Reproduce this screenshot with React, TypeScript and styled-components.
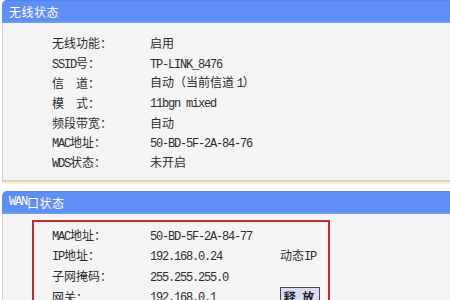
import styled, { createGlobalStyle } from "styled-components";

const GlobalStyle = createGlobalStyle`
  html, body {
    margin: 0;
    padding: 0;
    background: #ffffff;
    overflow: hidden;
  }
  body {
    font-family: "Noto Sans CJK SC", "Liberation Sans", sans-serif;
    font-size: 12px;
    color: #2b2b2b;
  }
`;

type Row = { label: React.ReactNode; value: React.ReactNode; extra?: React.ReactNode };

function App() {
  const wirelessRows: Row[] = [
    { label: "无线功能：", value: "启用" },
    { label: <><L>SSID</L>号：</>, value: <L>TP-LINK_8476</L> },
    { label: "信　道：", value: <>自动（当前信道 <L>1</L>）</> },
    { label: "模　式：", value: <L>11bgn mixed</L> },
    { label: "频段带宽：", value: "自动" },
    { label: <><L>MAC</L>地址：</>, value: <L>50-BD-5F-2A-84-76</L> },
    { label: <><L>WDS</L>状态：</>, value: "未开启" },
  ];

  const wanRows: Row[] = [
    { label: <><L>MAC</L>地址：</>, value: <L>50-BD-5F-2A-84-77</L> },
    { label: <><L>IP</L>地址：</>, value: <L>192.168.0.24</L>, extra: <span>动态<L>IP</L></span> },
    { label: "子网掩码：", value: <L>255.255.255.0</L> },
    { label: "网关：", value: <L>192.168.0.1</L>, extra: <ReleaseBtn>释 放</ReleaseBtn> },
  ];

  return (
    <Page>
      <GlobalStyle />
      <Panel>
        <Header>无线状态</Header>
        <Body>
          <Table>
            {wirelessRows.map((r, i) => (
              <Line key={i}>
                <Label>{r.label}</Label>
                <Value>{r.value}</Value>
                <Extra />
              </Line>
            ))}
          </Table>
        </Body>
      </Panel>
      <Panel $gap>
        <Header>
          <L>WAN</L>口状态
        </Header>
        <Body $wan>
          <Highlight>
            {wanRows.map((r, i) => (
              <Line key={i} $tall>
                <Label>{r.label}</Label>
                <Value>{r.value}</Value>
                <Extra>{r.extra}</Extra>
              </Line>
            ))}
          </Highlight>
        </Body>
      </Panel>
    </Page>
  );
}

export default App;

const Page = styled.div`
  width: 450px;
  height: 300px;
  overflow: hidden;
  padding-left: 2px;
  box-sizing: border-box;
`;

const Panel = styled.section<{ $gap?: boolean }>`
  margin-top: ${({ $gap }) => ($gap ? "9px" : "0")};
`;

const Header = styled.div`
  height: 23px;
  box-sizing: border-box;
  border-radius: 5px 0 0 0;
  background: linear-gradient(#4f82e8 0, #5e8ff5 2px, #5e8ff5 21px, #7aa2f0 23px);
  color: #ffffff;
  padding-left: 7px;
  display: flex;
  align-items: center;
  font-size: 12px;
  letter-spacing: 0.5px;
`;

const Body = styled.div<{ $wan?: boolean }>`
  background: #f4f4f4;
  border-left: 1px solid #ded3b4;
  border-bottom: ${({ $wan }) => ($wan ? "none" : "2px solid #ddd2b2")};
  box-shadow: ${({ $wan }) => ($wan ? "none" : "0 2px 0 #f6f0de")};
  padding: ${({ $wan }) => ($wan ? "6px 0 40px 29px" : "10px 0 8px 49px")};
`;

const Table = styled.div`
  display: flex;
  flex-direction: column;
`;

const Highlight = styled.div`
  width: 298px;
  box-sizing: border-box;
  border: 2px solid #c62a2f;
  border-bottom: none;
  padding: 3px 0 0 18px;
`;

const Line = styled.div<{ $tall?: boolean }>`
  display: grid;
  grid-template-columns: 98px 130px auto;
  align-items: center;
  height: ${({ $tall }) => ($tall ? "20.5px" : "19.8px")};
  white-space: nowrap;
`;

const Label = styled.div`
  color: #2e2e2e;
`;

const Value = styled.div`
  color: #2e2e2e;
`;

const Extra = styled.div`
  display: flex;
  align-items: center;
  color: #2e2e2e;
`;

const L = styled.span`
  font-family: "Liberation Mono", "DejaVu Sans Mono", monospace;
  font-size: 12px;
  letter-spacing: -1.2px;
`;

const ReleaseBtn = styled.button`
  width: 40px;
  height: 18px;
  padding: 0;
  border: 1px solid #4a4a4a;
  background: #d9dcf2;
  font-family: "Noto Sans CJK SC", sans-serif;
  font-size: 12px;
  font-weight: bold;
  color: #222;
  letter-spacing: 2px;
`;
